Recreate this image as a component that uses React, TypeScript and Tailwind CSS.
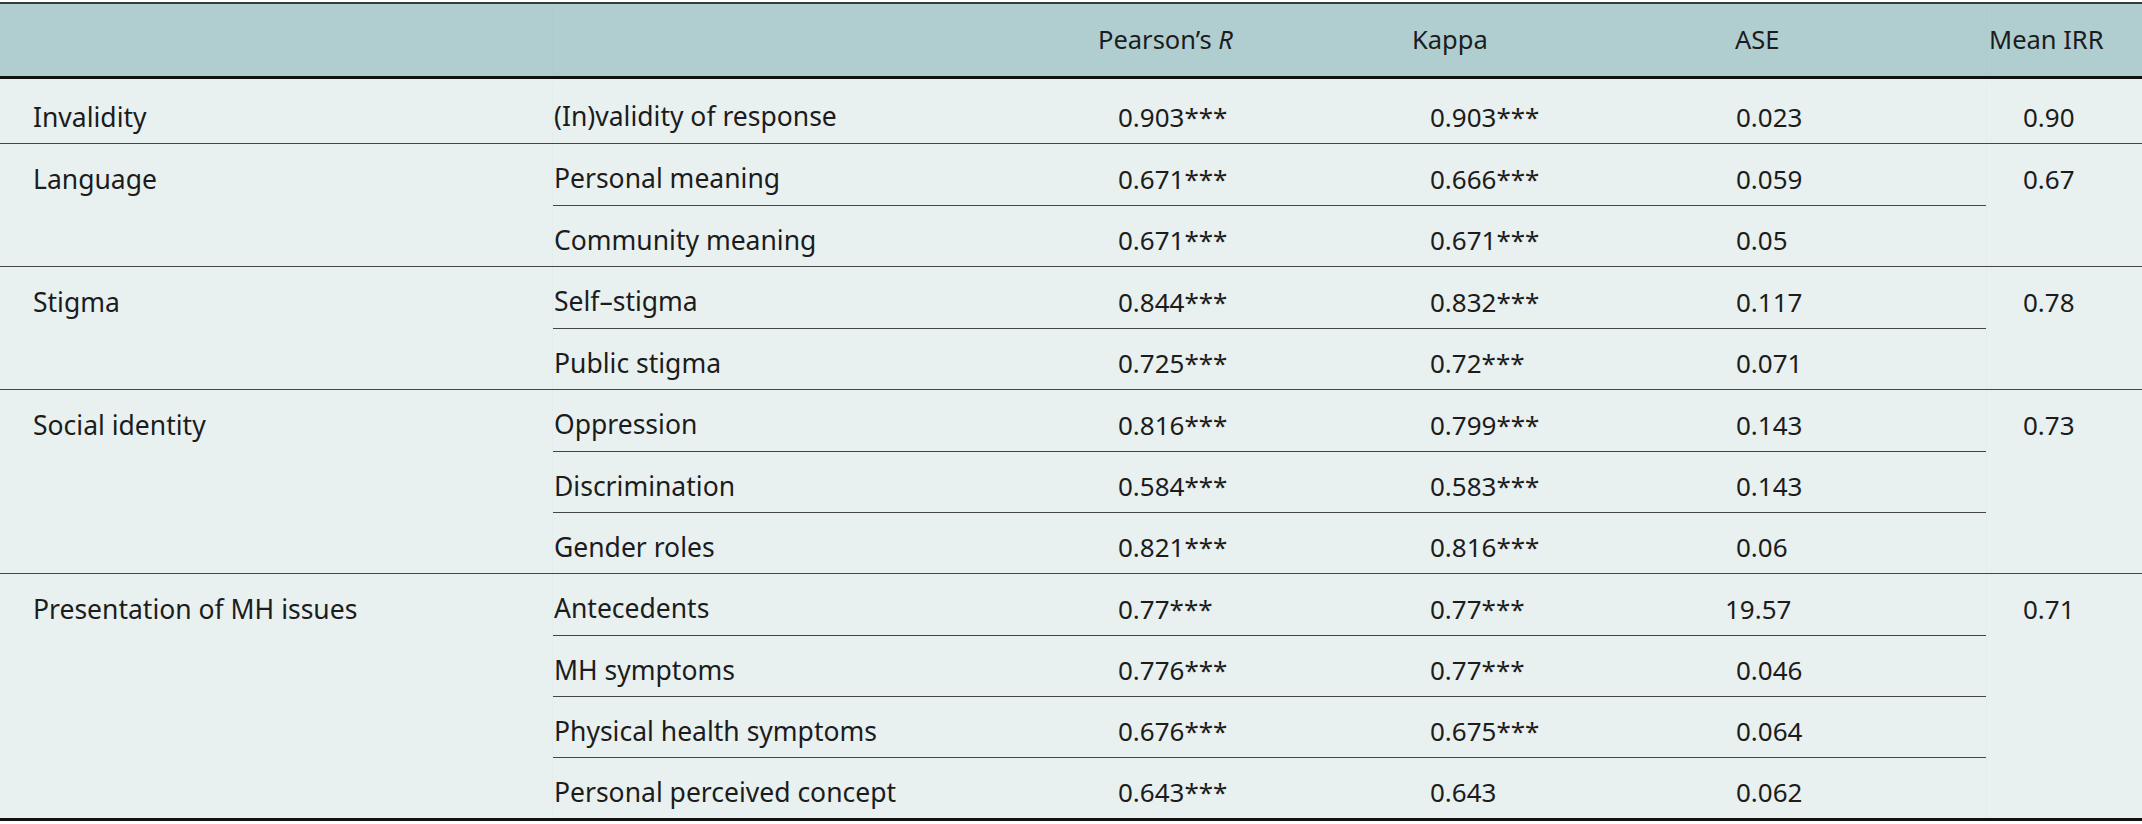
import React from "react";

type Sub = { item: string; r: string; k: string; ase: string; asePad?: boolean };
type Group = { label: string; mean: string; rows: Sub[] };

const groups: Group[] = [
  {
    label: "Invalidity",
    mean: "0.90",
    rows: [{ item: "(In)validity of response", r: "0.903***", k: "0.903***", ase: "0.023" }],
  },
  {
    label: "Language",
    mean: "0.67",
    rows: [
      { item: "Personal meaning", r: "0.671***", k: "0.666***", ase: "0.059" },
      { item: "Community meaning", r: "0.671***", k: "0.671***", ase: "0.05" },
    ],
  },
  {
    label: "Stigma",
    mean: "0.78",
    rows: [
      { item: "Self–stigma", r: "0.844***", k: "0.832***", ase: "0.117" },
      { item: "Public stigma", r: "0.725***", k: "0.72***", ase: "0.071" },
    ],
  },
  {
    label: "Social identity",
    mean: "0.73",
    rows: [
      { item: "Oppression", r: "0.816***", k: "0.799***", ase: "0.143" },
      { item: "Discrimination", r: "0.584***", k: "0.583***", ase: "0.143" },
      { item: "Gender roles", r: "0.821***", k: "0.816***", ase: "0.06" },
    ],
  },
  {
    label: "Presentation of MH issues",
    mean: "0.71",
    rows: [
      { item: "Antecedents", r: "0.77***", k: "0.77***", ase: "19.57", asePad: true },
      { item: "MH symptoms", r: "0.776***", k: "0.77***", ase: "0.046" },
      { item: "Physical health symptoms", r: "0.676***", k: "0.675***", ase: "0.064" },
      { item: "Personal perceived concept", r: "0.643***", k: "0.643", ase: "0.062" },
    ],
  },
];

function SubRow({ s, first }: { s: Sub; first: boolean }) {
  return (
    <div
      className={`grid grid-cols-[538px_315px_310px_271px] h-[61px] items-center pt-[8px] ${
        first ? "" : "border-t border-[#454545]"
      }`}
    >
      <div className="pl-[1px] whitespace-nowrap text-[26.5px]">{s.item}</div>
      <div className="pl-[27px]">{s.r}</div>
      <div className="pl-[24px]">{s.k}</div>
      <div className={s.asePad ? "pl-[9px]" : "pl-[20px]"}>{s.ase}</div>
    </div>
  );
}

export default function App() {
  return (
    <div
      className="w-[2142px] h-[824px] bg-white text-[#1c1c1c] text-[26px] leading-none"
      style={{ fontFamily: '"Noto Sans", "Open Sans", sans-serif' }}
    >
      <div className="pt-[2px]">
        <div className="border-t-2 border-[#3a3a3a]" />
        {/* header */}
        <div className="grid grid-cols-[552px_538px_315px_310px_271px_1fr] h-[75px] items-center bg-[#b0ced0] border-b-[3px] border-[#111] text-[25.5px]">
          <div />
          <div className="self-stretch border-l border-[#adcbcd]" />
          <div className="pl-[8px] whitespace-nowrap">
            Pearson’s <span className="italic">R</span>
          </div>
          <div className="pl-[7px]">Kappa</div>
          <div className="pl-[20px]">ASE</div>
          <div className="self-stretch flex items-center pl-[2px] border-l border-[#adcbcd] whitespace-nowrap">
            Mean IRR
          </div>
        </div>
        {/* body */}
        <div className="bg-[#e8f0f0] pt-[3px] border-b-[3px] border-[#111]">
          {groups.map((g, gi) => (
            <div
              key={g.label}
              className={`grid grid-cols-[552px_1434px_1fr] ${gi > 0 ? "border-t border-[#454545]" : ""}`}
            >
              <div className="pl-[33px] pt-[22px] whitespace-nowrap text-[26.5px]">{g.label}</div>
              <div className="flex flex-col border-l border-[#e4eded]">
                {g.rows.map((s, si) => (
                  <SubRow key={s.item} s={s} first={si === 0} />
                ))}
              </div>
              <div className="pl-[36px] pt-[22px] border-l border-[#e4eded]">{g.mean}</div>
            </div>
          ))}
        </div>
      </div>
    </div>
  );
}
